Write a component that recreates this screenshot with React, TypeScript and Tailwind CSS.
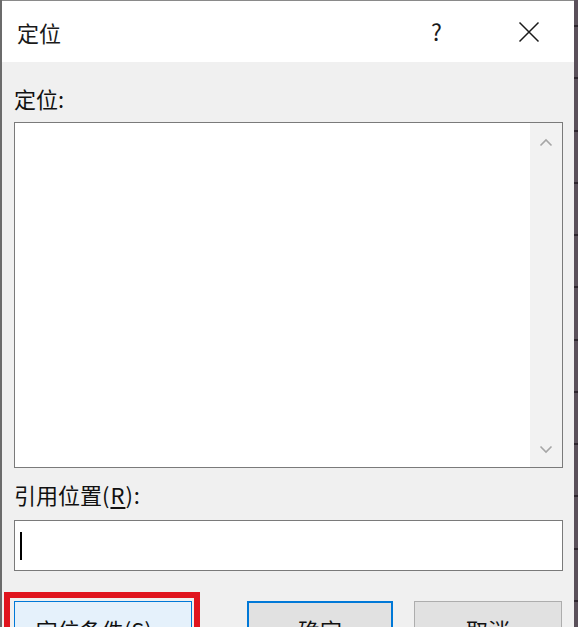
import React from "react";

const FONT = { fontFamily: '"Noto Sans CJK SC", "Noto Sans", sans-serif' };

function Chevron({ up }: { up?: boolean }) {
  return (
    <svg width="14" height="9" viewBox="0 0 14 9" fill="none" aria-hidden="true">
      <path
        d={up ? "M1.5 7.5L7 2l5.5 5.5" : "M1.5 1.5L7 7l5.5-5.5"}
        stroke="#a6a6a6"
        strokeWidth="1.6"
      />
    </svg>
  );
}

function CloseIcon() {
  return (
    <svg width="22" height="22" viewBox="0 0 22 22" fill="none" aria-hidden="true">
      <path d="M1.5 1.5l19 19M20.5 1.5l-19 19" stroke="#1a1a1a" strokeWidth="1.5" />
    </svg>
  );
}

export default function App() {
  return (
    <div className="relative flex h-[627px] w-[578px] overflow-hidden bg-[#f0f0f0]" style={FONT}>
      {/* left window edge */}
      <div className="w-[2px] shrink-0 bg-[#6b6b6b]" />

      <div className="flex min-w-0 flex-1 flex-col border-t border-[#8a8a8a]">
        {/* title bar */}
        <div className="flex h-[61px] shrink-0 items-center bg-white pl-[15px]">
          <span className="text-[22px] leading-none text-[#1a1a1a]">定位</span>
          <span className="ml-auto mr-[76px] text-[23px] leading-none text-[#1a1a1a]">?</span>
          <span className="mr-[34px] flex">
            <CloseIcon />
          </span>
        </div>

        {/* body */}
        <div className="flex flex-1 flex-col pl-[12px] pr-[11px] pt-[20px]">
          <div className="h-[32px] text-[22px] leading-[32px] text-[#111]">定位:</div>

          <div className="mt-[8px] flex h-[346px] border border-[#7a7a7a] bg-white">
            <div className="flex-1" />
            <div className="flex w-[32px] flex-col items-center justify-between bg-[#f2f2f2] pb-[13px] pt-[15px]">
              <Chevron up />
              <Chevron />
            </div>
          </div>

          <div className="mt-[10px] h-[32px] text-[22px] leading-[32px] text-[#111]">
            引用位置<span className="tracking-[1px]">(<span className="underline underline-offset-[3px]">R</span>):</span>
          </div>

          <div className="mt-[10px] flex h-[51px] items-center border border-[#7a7a7a] bg-white pl-[5px]">
            <div className="h-[28px] w-[2px] bg-black" />
          </div>

          <div className="mt-[30px] flex">
            <button className="h-[56px] w-[178px] shrink-0 border border-[#0078d7] bg-[#e5f1fb] text-[22px] text-[#111]">
              定位条件(S)...
            </button>
            <button className="ml-[55px] h-[56px] w-[146px] shrink-0 border-2 border-[#0078d7] bg-[#e1e1e1] text-[22px] text-[#111]">
              确定
            </button>
            <button className="ml-[21px] h-[56px] w-[148px] shrink-0 border border-[#adadad] bg-[#e1e1e1] text-[22px] text-[#111]">
              取消
            </button>
          </div>
        </div>
      </div>

      {/* right edge: sheet behind the dialog */}
      <div className="flex w-[4px] shrink-0 flex-col justify-around bg-[#5a505a]">
        {Array.from({ length: 12 }).map((_, i) => (
          <div key={i} className="h-[2px] bg-[#2e262e]" />
        ))}
      </div>

      {/* red highlight around the first button */}
      <div className="pointer-events-none absolute left-[4px] top-[592px] h-[60px] w-[196px] border-[6px] border-[#e0141e]" />
    </div>
  );
}
